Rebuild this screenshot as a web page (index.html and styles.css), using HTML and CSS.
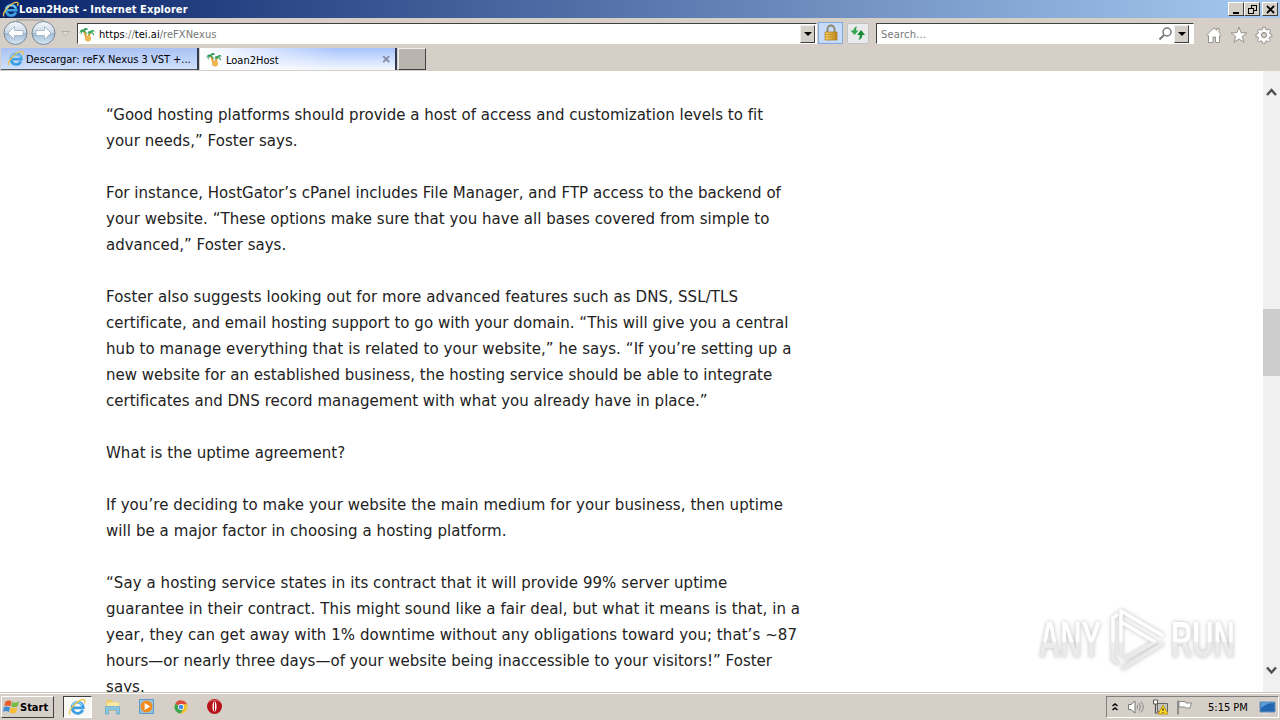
FILE: index.html
```
<!DOCTYPE html>
<html lang="en">
<head>
  <meta charset="UTF-8">
  <title>Loan2Host</title>
  <link rel="stylesheet" href="styles.css">
</head>
<body>
  <svg class="defs" width="0" height="0">
    <defs>
      <linearGradient id="gold" x1="0" y1="0" x2="1" y2="0"><stop offset="0" stop-color="#f6d36a"/><stop offset="1" stop-color="#bd8514"/></linearGradient>
      <linearGradient id="nav" x1="0" y1="0" x2="0" y2="1"><stop offset="0" stop-color="#f4f7fa"/><stop offset=".48" stop-color="#c9d8e6"/><stop offset=".52" stop-color="#9fbcd4"/><stop offset="1" stop-color="#d7e8f4"/></linearGradient>
      <linearGradient id="mark" gradientUnits="userSpaceOnUse" x1="0" y1="0" x2="0" y2="66"><stop offset=".5" stop-color="#fff"/><stop offset=".55" stop-color="#ededed"/><stop offset="1" stop-color="#e6e6e6"/></linearGradient>
      <symbol id="ie" viewBox="0 0 16 16">
        <path d="M13.1 10.700A4.900 4.900 0 1 1 13.500 8.700H4.500" fill="none" stroke="#3b9fe2" stroke-width="2.500"/>
        <path d="M3.500 7c1.200-3.600 7.500-3.800 9.300-.5" fill="none" stroke="#8fd6f8" stroke-width="1"/>
        <path d="M1.800 14.400C-.600 11.500 9 .8 14.200 1.400c1.500.3 1 2.100.2 3.300" fill="none" stroke="#ecc44c" stroke-width="1.200"/>
      </symbol>
      <symbol id="palm" viewBox="0 0 16 16">
        <path d="M4.600 5c1.800 2.500 2 5 3.200 9M11.500 6.500c-1.500 2-2 4-2.500 7.500" fill="none" stroke="#e59a2d" stroke-width="1.800"/>
        <path d="M.5 7.500C.5 4 2.500 3 4.500 3.800 5.500 1.500 8 1.500 9.200 4 7.500 3.600 6.500 4 5.600 4.900 7.500 5.500 8 7 7.400 9 6.500 6.500 5.500 5.800 4.300 5.600 3 6 2.500 7 2.300 9 1.200 7.500 1.800 6 2.600 5.300 1.600 5.600 1 6.300.5 7.500z" fill="#2b9a58"/>
        <path d="M8.500 8C8.600 5.500 10 4.600 11.500 5.300 12.300 3.600 14.500 3.500 15.700 5.500 14.300 5.200 13.400 5.500 12.700 6.200 15 6.500 15.500 8.400 14.900 10 14 8 13 7.200 11.600 6.900 10.300 7.200 10 8.400 9.800 9.500 9 8.500 9.400 7.300 10 6.700 9.300 6.800 8.900 7.300 8.500 8z" fill="#35a65d"/>
        <circle cx="9" cy="12.500" r="3" fill="#efb44d"/>
      </symbol>
    </defs>
  </svg>

  <div class="window">
    <header class="titlebar">
      <svg class="title-icon" width="17" height="17"><use href="#ie"/></svg>
      <span class="title-text">Loan2Host - Internet Explorer</span>
      <div class="window-buttons">
        <span class="win-btn"><svg width="13" height="11"><path d="M3 9h6" stroke="#000" stroke-width="2"/></svg></span>
        <span class="win-btn"><svg width="13" height="11"><path d="M5 1.500h6M5.500 1v3M10.500 1v6M8 6.500h3M2 4.500h6M2.500 4v6M7.500 4v6M2 9.500h6" fill="none" stroke="#000"/></svg></span>
        <span class="win-btn close"><svg width="13" height="11"><path d="M3 2l7 7M10 2L3 9" stroke="#000" stroke-width="1.800"/></svg></span>
      </div>
    </header>

    <div class="toolbar">
      <svg class="nav" width="74" height="28">
        <path d="M16 2H44" stroke="#b7b4b0" stroke-width="2"/>
        <g stroke="#798795" fill="url(#nav)"><circle cx="15.500" cy="15" r="11.500"/><circle cx="43.500" cy="15" r="11.500"/></g>
        <path d="M14.500 8.500L8 15l6.500 6.500v-4H23v-5h-8.500zM44.500 8.500l6.500 6.500-6.500 6.500v-4H36v-5h8.500z" fill="#fff" stroke="#9dafbf" stroke-width=".8"/>
        <path d="M61.500 13.500h8l-4 4.500z" fill="#e1ddd7" stroke="#aaa59f" stroke-width=".8"/>
      </svg>
      <div class="address field">
        <svg class="favicon" width="16" height="16"><use href="#palm"/></svg>
        <span class="url">https<i>://</i>tei.ai<i>/reFXNexus</i></span>
        <span class="drop"></span>
      </div>
      <div class="lock">
        <svg width="16" height="18"><path d="M4.500 9V5a3.500 3.500 0 0 1 7 0v4" fill="none" stroke="#8d8367" stroke-width="1.800"/><path d="M2 8h12v8H2z" fill="url(#gold)" stroke="#b07a18" stroke-width=".7"/><path d="M2 10.500h12M2 13h12" stroke="#c18b21" stroke-width=".7"/></svg>
      </div>
      <div class="refresh">
        <svg width="18" height="16"><path d="M8 1.500C5.500 2 4.500 3.500 4.500 5.500H1.500L5.500 10l4-4.500H7C7 4 7.300 2.700 8 1.500z" fill="#35a64b"/><path d="M9.500 15c2.500-.5 3.800-2.500 3.800-5H16L12 5 8 10h2.700c0 2-.4 3.500-1.200 5z" fill="#188b35"/></svg>
      </div>
      <div class="search field">
        <span class="placeholder">Search...</span>
        <svg width="15" height="16"><circle cx="9" cy="6" r="4" fill="none" stroke="#777" stroke-width="1.500"/><path d="M6 9l-4.500 4.500" stroke="#777" stroke-width="2"/></svg>
        <span class="drop"></span>
      </div>
      <div class="tools">
        <svg width="18" height="18"><path d="M1.500 9L9 1.800l2.700 2.600V2.500H14v4.200L16.500 9l-1.300 1.300-.7-.6v6.800h-4V11H8v5.500H3.500V9.700l-.7.600z" fill="#fff" stroke="#8d8984" stroke-width=".9"/></svg>
        <svg width="18" height="18"><path d="M9 1.200l2.100 5.500 5.800.2-4.600 3.600 1.600 5.700L9 13l-4.900 3.200 1.600-5.700L1.100 6.900l5.800-.2z" fill="#fff" stroke="#8d8984" stroke-width=".9"/></svg>
        <svg width="18" height="18" viewBox="-9 -9 18 18">
          <path d="M-1.300-7.600h2.600l.4 2 1.500.7 1.800-1.200L6.600-4 5.400-2.300l.5 1.200 1.900.2v2.600l-2.100.4-.5 1.300 1.200 1.700-1.800 1.800-1.700-1.100-1.300.5-.4 2.100h-2.600l-.4-2.100-1.300-.5-1.700 1.100-1.800-1.800 1.200-1.700-.5-1.300-2.100-.4v-2.600l2.100-.4.5-1.200L-6.600-4l1.800-1.900L-3-4.800l1.300-.6z" fill="#fff" stroke="#8d8984" stroke-width=".9"/>
          <circle r="2.600" fill="#d4d0c8" stroke="#8d8984"/>
        </svg>
      </div>
    </div>

    <nav class="tabs">
      <div class="tab"><svg width="17" height="17"><use href="#ie"/></svg><span class="tab-one">Descargar: reFX Nexus 3 VST +...</span></div>
      <div class="tab active"><svg width="16" height="16"><use href="#palm"/></svg><span>Loan2Host</span><svg class="tab-close" width="9" height="9"><path d="M1.200 1.200l6 6M7.200 1.200l-6 6" stroke="#858ca5" stroke-width="1.900"/></svg></div>
      <div class="new-tab"></div>
    </nav>

    <main class="page">
      <article>
        <p><span class="ls-1">“Good hosting platforms should provide a host of access and customization levels to fit</span><br><span class="ls-2">your needs,” Foster says.</span></p>
        <p class="ls-2">For instance, HostGator’s cPanel includes File Manager, and FTP access to the backend of<br>your website. “These options make sure that you have all bases covered from simple to<br><span class="ls-0">advanced,” Foster says.</span></p>
        <p><span class="ls-4">Foster also suggests looking out for more advanced features such as DNS, SSL/TLS</span><br><span class="ls-2">certificate, and email hosting support to go with your domain. “This will give you a central</span><br><span class="ls-3">hub to manage everything that is related to your website,” he says. “If you’re setting up a</span><br><span class="ls-1">new website for an established business, the hosting service should be able to integrate<br>certificates and DNS record management with what you already have in place.”</span></p>
        <p class="ls-2">What is the uptime agreement?</p>
        <p class="ls-3">If you’re deciding to make your website the main medium for your business, then uptime<br>will be a major factor in choosing a hosting platform.</p>
        <p class="ls-3">“Say a hosting service states in its contract that it will provide 99% server uptime<br>guarantee in their contract. This might sound like a fair deal, but what it means is that, in a<br>year, they can get away with 1% downtime without any obligations toward you; that’s ~87<br><span class="ls-1">hours—or nearly three days—of your website being inaccessible to your visitors!” Foster</span><br>says.</p>
      </article>
      <div class="scrollbar">
        <svg class="arrow-up" width="17" height="12"><path d="M4 9l4.500-5L13 9" fill="none" stroke="#505050" stroke-width="2.500"/></svg>
        <div class="thumb"></div>
        <svg class="arrow-down" width="17" height="12"><path d="M4 2.500l4.500 5 4.500-5" fill="none" stroke="#505050" stroke-width="2.500"/></svg>
      </div>
      <div class="watermark">
        <span class="any">ANY</span>
        <svg width="60" height="66" viewBox="0 0 60 66"><g fill="none" stroke="url(#mark)" stroke-width="3.600" stroke-linejoin="round" stroke-linecap="round"><path d="M9 8l-4 3v42l5 3"/><path d="M13 48V4l41 24M15 16l32 19-30 17"/><path d="M15 61l39-24"/></g></svg>
        <span class="run">RUN</span>
      </div>
    </main>

    <footer class="taskbar">
      <div class="start">
        <svg width="17" height="16"><path d="M2.500 2.500Q6 .5 8.500 2.500L7.300 7.200Q4.500 5.700 1.200 7z" fill="#e85b28"/><path d="M9.300 3Q12 4.500 16 2.500L14.500 7.500Q11 9 8 7.500z" fill="#78b843"/><path d="M1 8Q4.500 6.800 7 8.300L5.800 13Q3 11.300 0 12.800z" fill="#3b8cd6"/><path d="M7.800 8.500Q11 10 14.300 8.500L13 13.500Q9.500 15 6.500 13.400z" fill="#f6bd32"/></svg>
        <span>Start</span>
      </div>
      <div class="task active-task"><svg width="18" height="18"><use href="#ie"/></svg></div>
      <svg class="launcher" width="18" height="18"><path d="M2 2h6l1 2h6v9H2z" fill="#edcf72"/><path d="M3 4.500h12V12H3z" fill="#f9e8a4"/><path d="M1.500 8.500h14V16h-3v-4h-8v4h-3z" fill="#88c7e7" stroke="#559dbf" stroke-width=".6"/></svg>
      <svg class="launcher" width="18" height="18"><path d="M1.500 1.500h14v14h-14z" fill="#94c4e7" stroke="#6098c8"/><circle cx="8.500" cy="8.500" r="6" fill="#f28b1e"/><path d="M6.700 5v7l5.500-3.500z" fill="#fff"/></svg>
      <svg class="launcher" width="18" height="18" viewBox="-9 -9 18 18"><circle r="6.500" fill="#f4c52d"/><path d="M0 0L-5.600-3.300A6.500 6.500 0 0 1 6-2.800L0-3z" fill="#dc4a3d"/><path d="M-5.600-3.300A6.500 6.500 0 0 0-.5 6.500L2.500 2z" fill="#3ca555"/><circle r="3" fill="#fff"/><circle r="2.300" fill="#4689ec"/></svg>
      <svg class="launcher" width="18" height="18"><circle cx="8.500" cy="8.500" r="7.500" fill="#b51219"/><path d="M3 4a7 5 0 0 1 11 0" stroke="#df6668" fill="none"/><ellipse cx="8.500" cy="8.500" rx="2" ry="5" fill="#fff"/><path d="M8.500 4v9" stroke="#b51219"/></svg>
      <div class="tray">
        <svg width="9" height="11"><path d="M1.500 4l2.500-2 2.500 2M1.500 8l2.500-2 2.500 2" fill="none" stroke="#000" stroke-width="1.400"/></svg>
        <svg class="speaker" width="18" height="16"><path d="M1.500 5.500H4L8 2v12l-4-3.500H1.500z" fill="#fff" stroke="#777"/><path d="M10 6q1.500 2 0 4M12 4q3 4 0 8M14 2.500q4.500 5.500 0 11" fill="none" stroke="#888"/></svg>
        <svg class="network" width="17" height="17"><path d="M5.500 4.500h10v8h-10z" fill="#c4c4bf" stroke="#666"/><path d="M1.500 1h4v4h-4z" fill="#fff" stroke="#555"/><path d="M3.500 5v9H8" fill="none" stroke="#555" stroke-width="1.200"/><path d="M11 6l5 9H6z" fill="#ffdb27" stroke="#c09412"/><path d="M11 9v3M11 13v1" stroke="#222"/></svg>
        <svg class="flag" width="17" height="17"><path d="M2 1.500v14" stroke="#777" stroke-width="1.500"/><path d="M3 2.500h6l1 1.500h5.500L14 9h-4L8.500 8H3z" fill="#fff" stroke="#888"/></svg>
        <span class="clock">5:15 PM</span>
        <svg class="desktop" width="17" height="15"><path d="M1 2h15v10H1z" fill="#2367b2" stroke="#6a92b8"/><path d="M2 8Q8 3 15 3v-.500H2z" fill="#5ba0da"/><path d="M3 13.500h7" stroke="#ddd"/></svg>
      </div>
    </footer>
  </div>
</body>
</html>
```
FILE: styles.css
```
* {
  box-sizing: border-box;
}

body {
  margin: 0;
  overflow: hidden;
  font-family: "DejaVu Sans Condensed", "DejaVu Sans", sans-serif;
  font-size: 11px;
  color: #000;
}

svg {
  display: block;
  flex: none;
}

.defs {
  position: absolute;
}

.window {
  width: 1280px;
  height: 720px;
  display: flex;
  flex-direction: column;
  background: #d5cfc8;
}

.titlebar {
  height: 18px;
  flex: none;
  display: flex;
  align-items: center;
  padding: 0 2px;
  color: #fff;
  font-weight: bold;
  background: linear-gradient(90deg, #0a246a, #a6caf0);
}

.title-text {
  margin-left: 0;
  white-space: nowrap;
  letter-spacing: 0.08px;
}

.window-buttons {
  display: flex;
  margin-left: auto;
}

.win-btn {
  width: 16px;
  height: 14px;
  padding: 1px;
  background: #d4d0c8;
  border: 1px solid;
  border-color: #fff #404040 #404040 #fff;
}

.close {
  margin-left: 2px;
}

.toolbar {
  height: 29px;
  flex: none;
  display: flex;
  align-items: flex-start;
}

.nav {
  margin-right: 3px;
}

.field {
  height: 21px;
  margin-top: 5px;
  display: flex;
  align-items: center;
  background: #fff;
  border: 1px solid #fff;
  border-top-color: #404040;
  border-left-color: #404040;
}

.address {
  width: 740px;
}

.favicon {
  margin-left: 1px;
}

.url {
  margin-left: 4px;
  padding-top: 1px;
  letter-spacing: 0.04px;
}

.url i {
  font-style: normal;
  color: #777;
}

.drop {
  width: 15px;
  height: 18px;
  margin-left: auto;
  margin-right: 1px;
  background: #d4d0c8;
  border: 1px solid;
  border-color: #eee #404040 #404040 #eee;
}

.drop::after {
  content: "";
  display: block;
  width: 0;
  margin: 6px 0 0 3px;
  border: 4px solid transparent;
  border-top-color: #000;
  border-bottom: 0;
}

.lock {
  width: 25px;
  height: 22px;
  margin: 4px 0 0 1px;
  padding: 1px 4px;
  background: #c5dbf8;
  border: 1px solid #83a9dc;
}

.refresh {
  width: 22px;
  height: 21px;
  margin: 5px 0 0 4px;
  padding: 1px;
  background: #e8eaec;
  border: 1px solid #c2c2c3;
  border-radius: 2px;
}

.search {
  width: 318px;
  margin-left: 7px;
}

.search .drop {
  margin-left: 1px;
  margin-right: 4px;
}

.placeholder {
  margin-left: 4px;
  margin-right: auto;
  padding-top: 1px;
  color: #777;
  letter-spacing: 0.2px;
}

.tools {
  display: flex;
  gap: 7px;
  margin: 8px 0 0 11px;
}

.tabs {
  height: 24px;
  flex: none;
  display: flex;
  padding: 1px 0 1px 1px;
}

.tab {
  width: 198px;
  height: 22px;
  display: flex;
  align-items: center;
  padding-left: 6px;
  white-space: nowrap;
  background: linear-gradient(#a9c2f4, #d0e0fb);
  border-right: 2px solid #333b50;
  border-bottom: 1px solid #505867;
}

.tab span {
  margin-left: 3px;
  padding-top: 2px;
}

.tab .tab-one {
  margin-left: 2px;
  letter-spacing: -0.03px;
}

.active {
  width: 197px;
  margin-left: 1px;
  background: linear-gradient(90deg, #fff 0, rgba(255, 255, 255, 0) 70%), linear-gradient(#a7c3fc, #f4f8ff);
  border-bottom: 0;
}

.active span {
  margin-left: 4px;
}

.tab-close {
  margin-left: auto;
  margin-right: 4px;
}

.new-tab {
  width: 28px;
  height: 22px;
  margin-left: 1px;
  background: #b9b4ad;
  border: 1px solid;
  border-color: #eee #404040 #404040 #eee;
}

.page {
  position: relative;
  height: 621px;
  flex: none;
  display: flex;
  justify-content: space-between;
  overflow: hidden;
  background: #fff;
}

article {
  padding: 31px 0 0 106px;
  font-family: "DejaVu Sans", sans-serif;
  font-size: 15px;
  line-height: 26px;
  white-space: nowrap;
  color: #222;
  font-variant-ligatures: none;
}

article p {
  margin: 0 0 26px;
}

.ls-0 {
  letter-spacing: 0;
}

.ls-1 {
  letter-spacing: 0.015px;
}

.ls-2 {
  letter-spacing: 0.035px;
}

.ls-3 {
  letter-spacing: 0.068px;
}

.ls-4 {
  letter-spacing: 0.11px;
}

.scrollbar {
  width: 17px;
  height: 621px;
  display: flex;
  flex-direction: column;
  padding: 15px 0;
  background: #f0f0f0;
}

.thumb {
  height: 67px;
  margin-top: 211px;
  background: #cdcdcd;
}

.arrow-down {
  margin-top: auto;
}

/* sits over the page content */
.watermark {
  position: absolute;
  left: 1039px;
  top: 536px;
  display: flex;
  align-items: center;
  gap: 3px;
  font: bold 50px/66px "Liberation Sans", sans-serif;
  filter: drop-shadow(0 0 2px #bbb);
}

.watermark span {
  width: 64px;
  color: transparent;
  background: linear-gradient(#fff 52%, #ececec 54%, #e6e6e6);
  -webkit-background-clip: text;
  background-clip: text;
}

.watermark .any,
.watermark .run {
  width: 108px;
  margin-right: -44px;
  transform: scaleX(.59);
  transform-origin: left;
}

.watermark svg {
  margin-left: 2px;
}

.taskbar {
  height: 28px;
  flex: none;
  display: flex;
  align-items: center;
  border-top: 1px solid #c6c5ba;
  box-shadow: inset 0 1px #fff;
  padding-top: 1px;
}

.start {
  width: 53px;
  height: 22px;
  margin-left: 1px;
  display: flex;
  align-items: center;
  padding-left: 1px;
  font-weight: bold;
  border: 1px solid;
  border-color: #fff #404040 #404040 #fff;
}

.active-task {
  width: 29px;
  height: 22px;
  margin: 0 12px 0 9px;
  padding: 1px 4px;
  background: #f8f8f6;
  border: 1px solid;
  border-color: #404040 #fff #fff #404040;
}

.launcher {
  margin-right: 16px;
}

.tray {
  width: 173px;
  height: 22px;
  margin-left: auto;
  margin-right: 1px;
  display: flex;
  align-items: center;
  padding-left: 4px;
  border: 1px solid;
  border-color: #808080 #fff #fff #808080;
}

.speaker {
  margin-left: 7px;
}

.network {
  margin-left: 7px;
}

.flag {
  margin-left: 7px;
}

.clock {
  width: 42px;
  margin-left: 15px;
  white-space: nowrap;
}

.desktop {
  margin-left: 9px;
}
```
